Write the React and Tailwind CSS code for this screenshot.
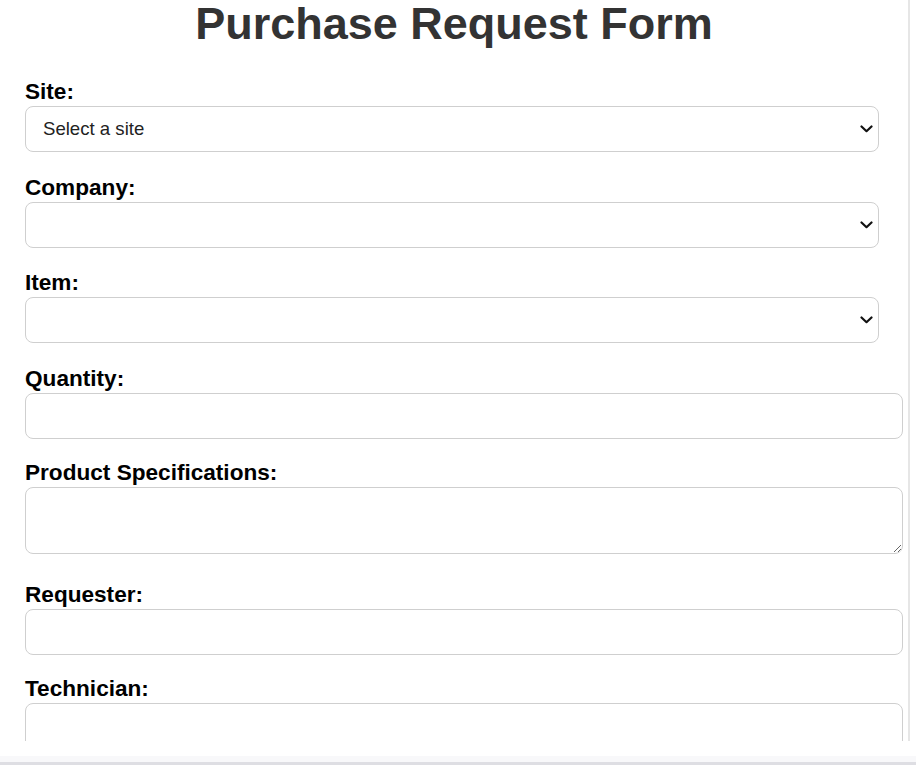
import React, { useState } from "react";

function Chevron() {
  return (
    <svg
      className="pointer-events-none absolute right-[6px] top-1/2 -translate-y-1/2"
      width="13"
      height="8"
      viewBox="0 0 13 8"
      fill="none"
    >
      <path d="M1.5 1.5 L6.5 6.2 L11.5 1.5" stroke="#111" strokeWidth="2.2" strokeLinecap="round" strokeLinejoin="round" />
    </svg>
  );
}

function SelectField({ label, value, onChange, options, className }) {
  return (
    <div className={className}>
      <label className="block text-[22.6px] leading-[26px] font-bold text-black mb-[1px]">{label}</label>
      <div className="relative w-[854px]">
        <select
          value={value}
          onChange={(e) => onChange(e.target.value)}
          className="appearance-none w-full h-[46px] border border-[#cfcfcf] rounded-lg bg-white pl-[17px] pr-8 text-[18.6px] text-[#222] outline-none"
        >
          {options.map((o) => (
            <option key={o.value} value={o.value}>
              {o.label}
            </option>
          ))}
        </select>
        <Chevron />
      </div>
    </div>
  );
}

function InputField({ label, value, onChange, className }) {
  return (
    <div className={className}>
      <label className="block text-[22.6px] leading-[26px] font-bold text-black mb-[1px]">{label}</label>
      <input
        type="text"
        value={value}
        onChange={(e) => onChange(e.target.value)}
        className="block w-[878px] h-[46px] border border-[#cfcfcf] rounded-lg bg-white px-[17px] text-[18.6px] text-[#222] outline-none"
      />
    </div>
  );
}

export default function App() {
  const [form, setForm] = useState({
    site: "",
    company: "",
    item: "",
    quantity: "",
    specs: "",
    requester: "",
    technician: "",
  });

  const set = (key) => (v) => setForm((f) => ({ ...f, [key]: v }));

  return (
    <div className="w-[916px] h-[765px] overflow-hidden bg-white font-['Liberation_Sans',Arial,sans-serif]">
      <div className="w-[910px] h-[741px] overflow-hidden border-r-2 border-[#e6e6e6]">
        <h1 className="text-center text-[45px] leading-[47px] font-bold text-[#333]">
          Purchase Request Form
        </h1>

        <form className="pl-[25px] pt-[32px]" onSubmit={(e) => e.preventDefault()}>
          {/* Site */}
          <SelectField
            label="Site:"
            value={form.site}
            onChange={set("site")}
            options={[{ value: "", label: "Select a site" }]}
          />

          {/* Company */}
          <SelectField
            label="Company:"
            value={form.company}
            onChange={set("company")}
            options={[{ value: "", label: "" }]}
            className="mt-[23px]"
          />

          {/* Item */}
          <SelectField
            label="Item:"
            value={form.item}
            onChange={set("item")}
            options={[{ value: "", label: "" }]}
            className="mt-[22px]"
          />

          <InputField label="Quantity:" value={form.quantity} onChange={set("quantity")} className="mt-[23px]" />

          <div className="mt-[21px]">
            <label className="block text-[22.6px] leading-[26px] font-bold text-black mb-[1px]">
              Product Specifications:
            </label>
            <textarea
              value={form.specs}
              onChange={(e) => set("specs")(e.target.value)}
              className="block w-[878px] h-[67px] border border-[#cfcfcf] rounded-lg bg-white px-[17px] py-2 text-[18.6px] text-[#222] outline-none"
            />
          </div>

          <InputField label="Requester:" value={form.requester} onChange={set("requester")} className="mt-[28px]" />

          <InputField label="Technician:" value={form.technician} onChange={set("technician")} className="mt-[21px]" />
        </form>
      </div>
      <div className="h-[15px] bg-white" />
      <div className="h-[6px] bg-[#f8f8fa]" />
      <div className="h-[3px] bg-[#dedee3]" />
    </div>
  );
}
